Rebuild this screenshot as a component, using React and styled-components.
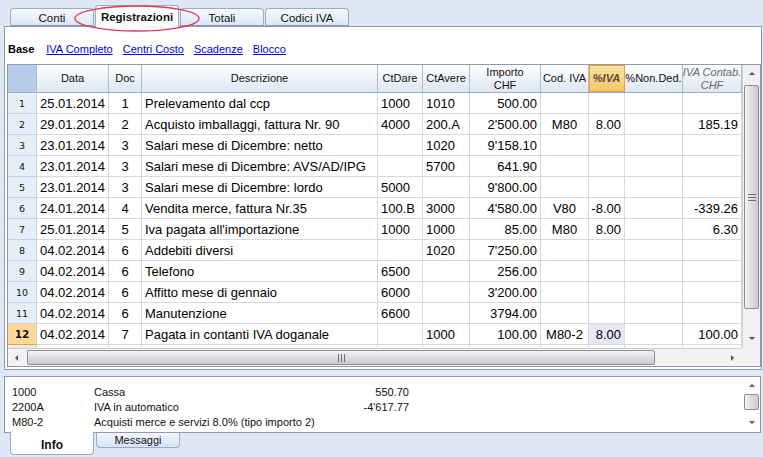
import React from "react";
import styled, { createGlobalStyle } from "styled-components";

// Banana-style accounting window: Registrazioni table with info pane.

const GlobalStyle = createGlobalStyle`
  html, body { margin: 0; padding: 0; }
  body { background: #dfe9f5; font-family: "Liberation Sans", Arial, sans-serif; }
`;

const columns = [
  { key: "data", title: "Data", width: 72, align: "left" },
  { key: "doc", title: "Doc", width: 33, align: "center" },
  { key: "desc", title: "Descrizione", width: 236, align: "left" },
  { key: "dare", title: "CtDare", width: 45, align: "left" },
  { key: "avere", title: "CtAvere", width: 47, align: "left" },
  { key: "importo", title: "Importo", sub: "CHF", width: 71, align: "right" },
  { key: "cod", title: "Cod. IVA", width: 48, align: "center" },
  { key: "piva", title: "%IVA", width: 36, align: "right", hot: true },
  { key: "nonded", title: "%Non.Ded.", width: 58, align: "right" },
  { key: "contab", title: "IVA Contab.", sub: "CHF", width: 59, align: "right", italic: true },
];

const rows = [
  ["25.01.2014", "1", "Prelevamento dal ccp", "1000", "1010", "500.00", "", "", "", ""],
  ["29.01.2014", "2", "Acquisto imballaggi, fattura Nr. 90", "4000", "200.A", "2'500.00", "M80", "8.00", "", "185.19"],
  ["23.01.2014", "3", "Salari mese di Dicembre: netto", "", "1020", "9'158.10", "", "", "", ""],
  ["23.01.2014", "3", "Salari mese di Dicembre: AVS/AD/IPG", "", "5700", "641.90", "", "", "", ""],
  ["23.01.2014", "3", "Salari mese di Dicembre: lordo", "5000", "", "9'800.00", "", "", "", ""],
  ["24.01.2014", "4", "Vendita merce, fattura Nr.35", "100.B", "3000", "4'580.00", "V80", "-8.00", "", "-339.26"],
  ["25.01.2014", "5", "Iva pagata all'importazione", "1000", "1000", "85.00", "M80", "8.00", "", "6.30"],
  ["04.02.2014", "6", "Addebiti diversi", "", "1020", "7'250.00", "", "", "", ""],
  ["04.02.2014", "6", "Telefono", "6500", "", "256.00", "", "", "", ""],
  ["04.02.2014", "6", "Affitto mese di gennaio", "6000", "", "3'200.00", "", "", "", ""],
  ["04.02.2014", "6", "Manutenzione", "6600", "", "3794.00", "", "", "", ""],
  ["04.02.2014", "7", "Pagata in contanti IVA doganale", "", "1000", "100.00", "M80-2", "8.00", "", "100.00"],
];

const infoLines = [
  { code: "1000", text: "Cassa", amount: "550.70" },
  { code: "2200A", text: "IVA in automatico", amount: "-4'617.77" },
  { code: "M80-2", text: "Acquisti merce e servizi 8.0% (tipo importo 2)", amount: "" },
];

const Window = styled.div`
  width: 763px;
  height: 457px;
  overflow: hidden;
  position: relative;
  display: flex;
  flex-direction: column;
`;

const TabBar = styled.div`
  position: relative;
  height: 26px;
  display: flex;
  align-items: flex-end;
  gap: 1px;
  padding-left: 10px;
`;

const Tab = styled.div`
  width: 84px;
  height: ${(p) => (p.$active ? 22 : 18)}px;
  box-sizing: border-box;
  border: 1px solid #9aabc4;
  border-bottom: ${(p) => (p.$active ? "none" : "1px solid #8d9bb0")};
  border-radius: 4px 4px 0 0;
  background: ${(p) =>
    p.$active ? "#ffffff" : "linear-gradient(#f7faff, #dce7f6)"};
  display: flex;
  align-items: center;
  justify-content: center;
  font-family: "Liberation Sans", Arial, sans-serif;
  font-size: 11.5px;
  font-weight: ${(p) => (p.$active ? 700 : 400)};
  color: #111;
  padding-top: ${(p) => (p.$active ? 0 : 2)}px;
  margin-bottom: ${(p) => (p.$active ? -1 : 0)}px;
  position: relative;
  z-index: ${(p) => (p.$active ? 2 : 1)};
`;

const Mark = styled.svg`
  position: absolute;
  left: 72px;
  top: 3px;
  z-index: 5;
  pointer-events: none;
`;

const Panel = styled.div`
  margin-left: 4px;
  width: 758px;
  height: 344px;
  box-sizing: border-box;
  border: 1px solid #8d9bb0;
  background: #fff;
  padding: 0 2px 0 2px;
  display: flex;
  flex-direction: column;
`;

const ViewBar = styled.div`
  height: 37px;
  display: flex;
  align-items: center;
  gap: 10px;
  padding: 6px 0 0 1px;
  box-sizing: border-box;
  font-family: "Liberation Sans", Arial, sans-serif;
  font-size: 11px;
`;

const ViewName = styled.span`
  font-weight: 700;
  color: #000;
  margin-right: 2px;
`;

const ViewLink = styled.a`
  color: #0000ee;
  text-decoration: underline;
  cursor: pointer;
`;

const Grid = styled.div`
  width: 754px;
  height: 303px;
  box-sizing: border-box;
  border: 1px solid #8f9aab;
  display: grid;
  grid-template-columns: 1fr 18px;
  grid-template-rows: 1fr 18px;
`;

const Sheet = styled.div`
  overflow: hidden;
  display: flex;
  flex-direction: column;
`;

const HeadRow = styled.div`
  display: flex;
  height: 28px;
  flex-shrink: 0;
  border-bottom: 1px solid #9bb0cc;
  box-sizing: border-box;
`;

const Corner = styled.div`
  width: 29px;
  background: #b6cceb;
  border-right: 1px solid #a9bcd5;
  box-sizing: border-box;
`;

const HeadCell = styled.div`
  width: ${(p) => p.$w}px;
  box-sizing: border-box;
  border-right: 1px solid ${(p) => (p.$hot ? "#f0a030" : "#a9bcd5")};
  background: ${(p) =>
    p.$hot
      ? "linear-gradient(#fde3a6, #f6c46a)"
      : "linear-gradient(#ffffff, #dfe7f2)"};
  ${(p) => p.$hot && "outline: 1px solid #f0a030; outline-offset: -1px;"}
  display: flex;
  flex-direction: column;
  align-items: center;
  justify-content: center;
  font-family: "Liberation Sans", Arial, sans-serif;
  font-size: 11px;
  line-height: 13px;
  color: ${(p) => (p.$italic ? "#666" : p.$hot ? "#5a4a2a" : "#111")};
  font-style: ${(p) => (p.$italic || p.$hot ? "italic" : "normal")};
  font-weight: ${(p) => (p.$hot ? 700 : 400)};
  white-space: nowrap;
  overflow: hidden;
`;

const Body = styled.div`
  flex: 1;
  overflow: hidden;
`;

const Row = styled.div`
  display: flex;
  height: 21px;
`;

const RowNum = styled.div`
  width: 29px;
  flex-shrink: 0;
  box-sizing: border-box;
  background: ${(p) => (p.$current ? "#fed894" : "#e6eef8")};
  border-bottom: 1px solid ${(p) => (p.$current ? "#f0a030" : "#c3d2e6")};
  border-right: 1px solid #c3d2e6;
  display: flex;
  align-items: center;
  justify-content: center;
  font-family: "DejaVu Sans", sans-serif;
  font-size: ${(p) => (p.$current ? 10.5 : 9.5)}px;
  font-weight: ${(p) => (p.$current ? 700 : 400)};
  color: #111;
`;

const Cell = styled.div`
  width: ${(p) => p.$w}px;
  flex-shrink: 0;
  box-sizing: border-box;
  border-right: 1px solid #d9d9d9;
  border-bottom: 1px solid #d9d9d9;
  background: ${(p) => (p.$sel ? "#e7e7f6" : "#fff")};
  display: flex;
  align-items: center;
  justify-content: ${(p) =>
    p.$align === "right" ? "flex-end" : p.$align === "center" ? "center" : "flex-start"};
  padding: 0 3px;
  font-family: "Liberation Sans", Arial, sans-serif;
  font-size: 13px;
  color: #000;
  white-space: nowrap;
  overflow: hidden;
`;

const VScroll = styled.div`
  background: #f2f2f2;
  border-left: 1px solid #d0d0d0;
  display: flex;
  flex-direction: column;
  align-items: center;
  padding: 2px 0;
  box-sizing: border-box;
`;

const HScroll = styled.div`
  background: #f2f2f2;
  border-top: 1px solid #d0d0d0;
  display: flex;
  align-items: center;
  padding: 0 2px;
  box-sizing: border-box;
`;

const ScrollCorner = styled.div`
  background: #f2f2f2;
`;

const Arrow = styled.div`
  width: 14px;
  height: 14px;
  flex-shrink: 0;
  display: flex;
  align-items: center;
  justify-content: center;
`;

const Thumb = styled.div`
  box-sizing: border-box;
  border: 1px solid #8e8f91;
  border-radius: 2px;
  background: ${(p) =>
    p.$horizontal
      ? "linear-gradient(#f4f4f5, #d9d9dc 60%, #c9cacd)"
      : "linear-gradient(90deg, #f4f4f5, #d9d9dc 60%, #c9cacd)"};
  display: flex;
  align-items: center;
  justify-content: center;
  ${(p) =>
    p.$horizontal
      ? `height: 15px; width: ${p.$size}px; margin-left: 3px;`
      : `width: 15px; height: ${p.$size}px; margin-top: ${p.$offset || 3}px;`}
`;

const Gap = styled.div`
  flex: 1;
`;

const Info = styled.div`
  margin: 6px 0 0 4px;
  width: 757px;
  height: 57px;
  box-sizing: border-box;
  border: 1px solid #8d9bb0;
  background: #fff;
  display: flex;
`;

const InfoText = styled.div`
  flex: 1;
  padding: 7px 0 0 7px;
  font-family: "Liberation Sans", Arial, sans-serif;
  font-size: 11px;
  color: #111;
`;

const InfoLine = styled.div`
  display: grid;
  grid-template-columns: 82px 200px 115px;
  height: 15px;
  align-items: center;
  white-space: nowrap;
`;

const InfoAmount = styled.span`
  text-align: right;
`;

const InfoScroll = styled.div`
  width: 17px;
  display: flex;
  flex-direction: column;
  align-items: center;
  padding: 2px 0;
  box-sizing: border-box;
`;

const BottomTabs = styled.div`
  display: flex;
  gap: 2px;
  padding-left: 10px;
  margin-top: -1px;
  align-items: flex-start;
`;

const BottomTab = styled.div`
  width: 84px;
  height: ${(p) => (p.$active ? 23 : 16)}px;
  box-sizing: border-box;
  border: 1px solid #9aabc4;
  border-top: ${(p) => (p.$active ? "none" : "1px solid #8d9bb0")};
  border-radius: 0 0 4px 4px;
  background: ${(p) => (p.$active ? "#fff" : "linear-gradient(#f3f7fd, #d7e3f4)")};
  display: flex;
  align-items: center;
  justify-content: center;
  font-family: "Liberation Sans", Arial, sans-serif;
  font-size: ${(p) => (p.$active ? 12 : 11)}px;
  font-weight: ${(p) => (p.$active ? 700 : 400)};
  color: #111;
  padding-top: ${(p) => (p.$active ? 3 : 0)}px;
`;

const Tri = ({ dir, color = "#555" }) => {
  const pts = {
    up: "1,5 4,2 7,5",
    down: "1,2 4,5 7,2",
    left: "5,1 2,4 5,7",
    right: "2,1 5,4 2,7",
  }[dir];
  return (
    <svg width="8" height="8" viewBox="0 0 8 8">
      <polygon points={pts} fill={color} />
    </svg>
  );
};

const Grip = ({ horizontal }) =>
  horizontal ? (
    <svg width="9" height="8" viewBox="0 0 9 8">
      <path d="M1.5 0v8M4.5 0v8M7.5 0v8" stroke="#6f6f72" strokeWidth="1" />
    </svg>
  ) : (
    <svg width="8" height="9" viewBox="0 0 8 9">
      <path d="M0 1.5h8M0 4.5h8M0 7.5h8" stroke="#6f6f72" strokeWidth="1" />
    </svg>
  );

export default function App() {
  return (
    <Window>
      <GlobalStyle />
      <TabBar>
        <Tab>Conti</Tab>
        <Tab $active>Registrazioni</Tab>
        <Tab>Totali</Tab>
        <Tab>Codici IVA</Tab>
        <Mark width="130" height="30" viewBox="0 0 130 30">
          <ellipse cx="65" cy="15.5" rx="62" ry="12.5" fill="none" stroke="#e23a55" strokeWidth="1.4" />
        </Mark>
      </TabBar>

      <Panel>
        <ViewBar>
          <ViewName>Base</ViewName>
          <ViewLink>IVA Completo</ViewLink>
          <ViewLink>Centri Costo</ViewLink>
          <ViewLink>Scadenze</ViewLink>
          <ViewLink>Blocco</ViewLink>
        </ViewBar>

        <Grid>
          <Sheet>
            <HeadRow>
              <Corner />
              {columns.map((c) => (
                <HeadCell key={c.key} $w={c.width} $hot={c.hot} $italic={c.italic}>
                  <span>{c.title}</span>
                  {c.sub && <span>{c.sub}</span>}
                </HeadCell>
              ))}
            </HeadRow>
            <Body>
              {rows.map((r, i) => {
                const current = i === rows.length - 1;
                return (
                  <Row key={i}>
                    <RowNum $current={current}>{i + 1}</RowNum>
                    {columns.map((c, j) => (
                      <Cell
                        key={c.key}
                        $w={c.width}
                        $align={c.align}
                        $sel={current && c.hot}
                      >
                        {r[j]}
                      </Cell>
                    ))}
                  </Row>
                );
              })}
              <Row>
                <RowNum />
                {columns.map((c) => (
                  <Cell key={c.key} $w={c.width} />
                ))}
              </Row>
            </Body>
          </Sheet>

          <VScroll>
            <Arrow><Tri dir="up" /></Arrow>
            <Thumb $size={224} $offset={4}><Grip /></Thumb>
            <Gap />
            <Arrow><Tri dir="down" /></Arrow>
          </VScroll>

          <HScroll>
            <Arrow><Tri dir="left" /></Arrow>
            <Thumb $horizontal $size={628}><Grip horizontal /></Thumb>
            <Gap />
            <Arrow><Tri dir="right" /></Arrow>
          </HScroll>
          <ScrollCorner />
        </Grid>
      </Panel>

      <Info>
        <InfoText>
          {infoLines.map((l) => (
            <InfoLine key={l.code}>
              <span>{l.code}</span>
              <span>{l.text}</span>
              <InfoAmount>{l.amount}</InfoAmount>
            </InfoLine>
          ))}
        </InfoText>
        <InfoScroll>
          <Arrow><Tri dir="up" /></Arrow>
          <Thumb $size={16} $offset={1} />
          <Gap />
          <Arrow><Tri dir="down" /></Arrow>
        </InfoScroll>
      </Info>

      <BottomTabs>
        <BottomTab $active>Info</BottomTab>
        <BottomTab>Messaggi</BottomTab>
      </BottomTabs>
    </Window>
  );
}
